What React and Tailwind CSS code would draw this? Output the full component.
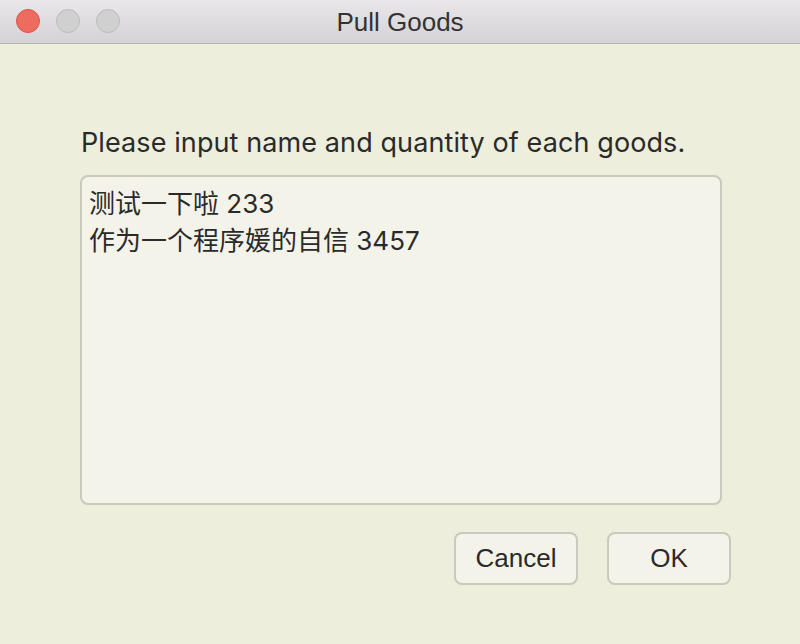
export default function App() {
  const font = { fontFamily: '"Liberation Sans", "Noto Sans CJK SC", sans-serif' };
  return (
    <div className="w-[800px] h-[644px] bg-[#eeeedc] flex flex-col text-[#2a2a2a]" style={font}>
      <div className="h-[44px] shrink-0 relative flex items-center justify-center bg-gradient-to-b from-[#e9e7e9] to-[#d4d2d4] border-b border-[#b3b1b3]">
        <div className="absolute left-[16px] top-[9px] flex gap-[16px]">
          <div className="w-[24px] h-[24px] rounded-full bg-[#ee6b60] border border-[#d6574c]" />
          <div className="w-[24px] h-[24px] rounded-full bg-[#d1d0d1] border border-[#bcbbbc]" />
          <div className="w-[24px] h-[24px] rounded-full bg-[#d1d0d1] border border-[#bcbbbc]" />
        </div>
        <span className="text-[26px] text-[#333] leading-none">Pull Goods</span>
      </div>
      <div className="flex flex-col pl-[80px] pt-[81px]">
        <div className="text-[27px] leading-[36px] pl-[1px] tracking-[0.1px] font-['Inter',sans-serif]">Please input name and quantity of each goods.</div>
        <div className="mt-[14px] w-[642px] h-[330px] bg-[#f3f3ea] border-2 border-[#c9c9bd] rounded-[8px] px-[7px] pt-[8px] text-[26px] leading-[37px] font-['Inter','Noto_Sans_CJK_SC',sans-serif]">
          <div>测试一下啦 233</div>
          <div>作为一个程序媛的自信 3457</div>
        </div>
        <div className="mt-[27px] flex gap-[29px] pl-[374px]">
          <button className="w-[124px] h-[53px] bg-[#f3f3ea] border-2 border-[#c9c9bd] rounded-[8px] text-[26px]">Cancel</button>
          <button className="w-[124px] h-[53px] bg-[#f3f3ea] border-2 border-[#c9c9bd] rounded-[8px] text-[26px]">OK</button>
        </div>
      </div>
    </div>
  );
}
